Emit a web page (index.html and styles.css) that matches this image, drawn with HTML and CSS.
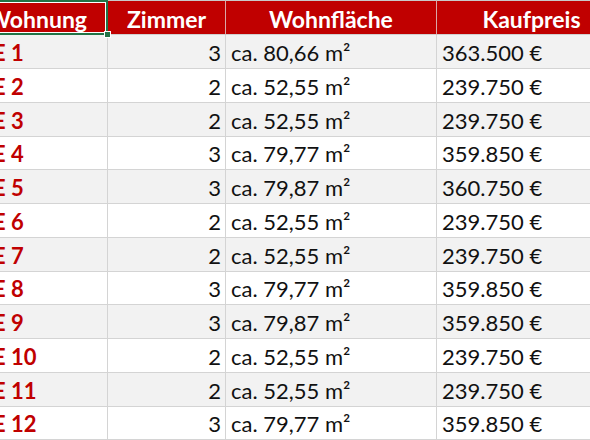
FILE: index.html
```html
<!DOCTYPE html>
<html lang="de">
<head>
<meta charset="utf-8">
<link rel="stylesheet" href="styles.css">
</head>
<body>
<div class="sheet">
  <div class="grid">
    <div class="cell head first selected">Wohnung<span class="handle"></span></div>
    <div class="cell head">Zimmer</div>
    <div class="cell head">Wohnfläche</div>
    <div class="cell head">Kaufpreis</div>

    <div class="cell name odd">E 1</div><div class="cell num odd">3</div><div class="cell txt odd">ca. 80,66 m²</div><div class="cell txt odd">363.500 €</div>
    <div class="cell name">E 2</div><div class="cell num">2</div><div class="cell txt">ca. 52,55 m²</div><div class="cell txt">239.750 €</div>
    <div class="cell name odd">E 3</div><div class="cell num odd">2</div><div class="cell txt odd">ca. 52,55 m²</div><div class="cell txt odd">239.750 €</div>
    <div class="cell name">E 4</div><div class="cell num">3</div><div class="cell txt">ca. 79,77 m²</div><div class="cell txt">359.850 €</div>
    <div class="cell name odd">E 5</div><div class="cell num odd">3</div><div class="cell txt odd">ca. 79,87 m²</div><div class="cell txt odd">360.750 €</div>
    <div class="cell name">E 6</div><div class="cell num">2</div><div class="cell txt">ca. 52,55 m²</div><div class="cell txt">239.750 €</div>
    <div class="cell name odd">E 7</div><div class="cell num odd">2</div><div class="cell txt odd">ca. 52,55 m²</div><div class="cell txt odd">239.750 €</div>
    <div class="cell name">E 8</div><div class="cell num">3</div><div class="cell txt">ca. 79,77 m²</div><div class="cell txt">359.850 €</div>
    <div class="cell name odd">E 9</div><div class="cell num odd">3</div><div class="cell txt odd">ca. 79,87 m²</div><div class="cell txt odd">359.850 €</div>
    <div class="cell name">E 10</div><div class="cell num">2</div><div class="cell txt">ca. 52,55 m²</div><div class="cell txt">239.750 €</div>
    <div class="cell name odd">E 11</div><div class="cell num odd">2</div><div class="cell txt odd">ca. 52,55 m²</div><div class="cell txt odd">239.750 €</div>
    <div class="cell name">E 12</div><div class="cell num">3</div><div class="cell txt">ca. 79,77 m²</div><div class="cell txt">359.850 €</div>
  </div>
</div>
</body>
</html>
```

FILE: styles.css
```css
html, body {
  margin: 0;
  padding: 0;
  background: #ffffff;
}
body {
  width: 590px;
  height: 440px;
  overflow: hidden;
  font-family: Lato, "Liberation Sans", sans-serif;
  font-size: 22px;
  color: #111111;
}
.sheet {
  width: 590px;
  height: 440px;
  overflow: hidden;
}
.grid {
  display: grid;
  grid-template-columns: 133px 118px 211px 190px;
  grid-template-rows: 35px repeat(3, 34px 34px 34px 33px);
  margin-left: -25px;
  width: 652px;
}
.cell {
  box-sizing: border-box;
  border-right: 1px solid #d4d4d4;
  border-bottom: 1px solid #d4d4d4;
  display: flex;
  align-items: flex-end;
  line-height: 22px;
  padding: 0 5px 4px 5px;
  white-space: nowrap;
  overflow: hidden;
  background: #ffffff;
}
.head {
  background: #c00000;
  color: #ffffff;
  font-weight: 700;
  font-size: 23px;
  justify-content: center;
  border-top: 1px solid #c9c9c9;
  border-right-color: #d9a7a7;
  border-bottom-color: #d0d0d0;
  padding-bottom: 4px;
}
.head.first {
  justify-content: flex-end;
  padding-right: 20px;
}
.odd {
  background: #f2f2f2;
}
.name {
  color: #c00000;
  font-weight: 700;
  padding-left: 18px;
}
.num {
  justify-content: flex-end;
  padding-right: 4px;
}
.txt {
  padding-left: 5px;
}
.selected {
  position: relative;
  overflow: visible;
}
.selected::after {
  content: "";
  position: absolute;
  left: 0;
  top: -1px;
  right: -1px;
  bottom: -1px;
  border: 2px solid #217346;
  box-shadow: inset 0 0 0 1px #ffffff;
  pointer-events: none;
}
.handle {
  position: absolute;
  right: -4px;
  bottom: -4px;
  width: 5px;
  height: 5px;
  background: #217346;
  border: 1px solid #ffffff;
  z-index: 2;
}
```
